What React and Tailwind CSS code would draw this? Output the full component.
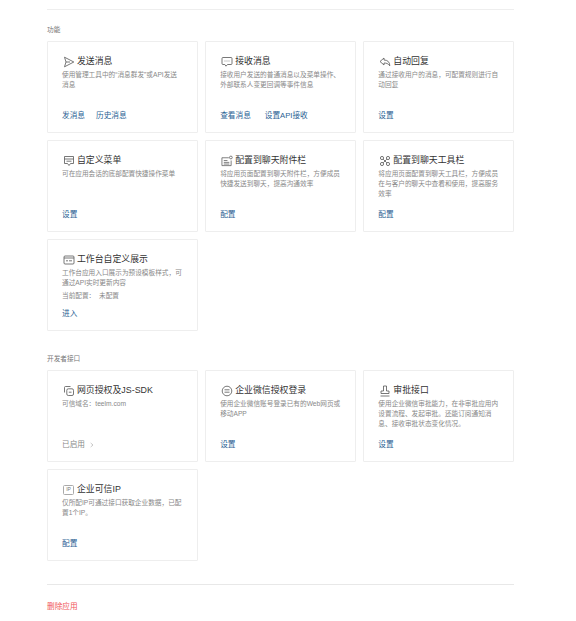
const Send = () => (
  <svg viewBox="0 0 12 12" className="w-[12px] h-[12px] shrink-0" fill="none" stroke="#555" strokeWidth="0.8">
    <path d="M1.5 1.2 L10.8 6 L1.5 10.8 L3 6 Z" />
    <path d="M3 6 H7" />
  </svg>
);

const Chat = () => (
  <svg viewBox="0 0 12 12" className="w-[12px] h-[12px] shrink-0" fill="none" stroke="#555" strokeWidth="0.8">
    <path d="M2 1.5 H10 A1 1 0 0 1 11 2.5 V7.5 A1 1 0 0 1 10 8.5 H6.5 L5 10.2 L3.8 8.5 H2 A1 1 0 0 1 1 7.5 V2.5 A1 1 0 0 1 2 1.5 Z" />
    <path d="M3.6 5 H4.4 M5.6 5 H6.4 M7.6 5 H8.4" />
  </svg>
);

const Reply = () => (
  <svg viewBox="0 0 12 12" className="w-[12px] h-[12px] shrink-0" fill="none" stroke="#555" strokeWidth="0.8">
    <path d="M5 2 L1 5.5 L5 9 V7 C7.5 7 9 7.5 10.8 9.8 C10.8 6 8.5 4 5 4 Z" />
  </svg>
);

const Menu = () => (
  <svg viewBox="0 0 12 12" className="w-[12px] h-[12px] shrink-0" fill="none" stroke="#555" strokeWidth="0.8">
    <path d="M1.5 1.5 H10.5 V8.5 H7.5 L6 10.5 L4.5 8.5 H1.5 Z" />
    <path d="M1.5 4 H10.5 M3.5 6.2 H8.5" />
  </svg>
);

const Attach = () => (
  <svg viewBox="0 0 13 12" className="w-[12px] h-[12px] shrink-0" fill="none" stroke="#555" strokeWidth="0.8">
    <path d="M8.5 2.5 H1 V11 H11 V5.5" />
    <path d="M3 5.5 H7 M3 7.5 H9 M3 9.3 H9" />
    <circle cx="10.7" cy="2.2" r="1.5" />
  </svg>
);

const Tool = () => (
  <svg viewBox="0 0 12 12" className="w-[12px] h-[12px] shrink-0" fill="none" stroke="#555" strokeWidth="0.8">
    <circle cx="3" cy="3" r="1.6" />
    <circle cx="9" cy="3" r="1.6" />
    <circle cx="3" cy="9" r="1.6" />
    <circle cx="9" cy="9" r="1.6" />
    <path d="M4.2 4.2 L7.8 7.8 M7.8 4.2 L4.2 7.8" />
  </svg>
);

const Board = () => (
  <svg viewBox="0 0 12 12" className="w-[12px] h-[12px] shrink-0" fill="none" stroke="#555" strokeWidth="0.8">
    <rect x="1" y="2" width="10" height="8" rx="1" />
    <path d="M1 4 H11 M3 6.8 H5 M6 6.8 H9" />
  </svg>
);

const Web = () => (
  <svg viewBox="0 0 12 12" className="w-[12px] h-[12px] shrink-0" fill="none" stroke="#555" strokeWidth="0.8">
    <path d="M7.5 1.5 H2.5 A1 1 0 0 0 1.5 2.5 V7.5" />
    <rect x="3.8" y="3.8" width="6.7" height="6.7" rx="1.5" />
    <path d="M5.8 7.2 H8.5" />
  </svg>
);

const Login = () => (
  <svg viewBox="0 0 12 12" className="w-[12px] h-[12px] shrink-0" fill="none" stroke="#555" strokeWidth="0.8">
    <circle cx="6" cy="6" r="4.8" />
    <path d="M3.5 4.8 H8.5 M3.5 7.2 H8.5" />
  </svg>
);

const Stamp = () => (
  <svg viewBox="0 0 12 12" className="w-[12px] h-[12px] shrink-0" fill="none" stroke="#555" strokeWidth="0.8">
    <path d="M4.5 1 H7.5 V6 H10 V8.5 H2 V6 H4.5 Z" />
    <path d="M1.5 11 H10.5" />
  </svg>
);

const IpBadge = () => (
  <span className="w-[11px] h-[10px] mr-[1px] shrink-0 border border-[#aaa] rounded-[1.5px] flex items-center justify-center text-[5px] leading-none text-[#777]">IP</span>
);

const features = [
  {
    icon: <Send />,
    title: '发送消息',
    desc: ['使用管理工具中的“消息群发”或API发送', <br key="br" />, '消息'],
    links: ['发消息', '历史消息'],
  },
  {
    icon: <Chat />,
    title: '接收消息',
    desc: ['接收用户发送的普通消息以及菜单操作、外部联系人变更回调等事件信息'],
    links: ['查看消息', '设置API接收'],
    linkGap: 'gap-[14px]',
  },
  {
    icon: <Reply />,
    title: '自动回复',
    desc: ['通过接收用户的消息，可配置规则进行自动回复'],
    links: ['设置'],
  },
  {
    icon: <Menu />,
    title: '自定义菜单',
    desc: ['可在应用会话的底部配置快捷操作菜单'],
    links: ['设置'],
  },
  {
    icon: <Attach />,
    title: '配置到聊天附件栏',
    desc: ['将应用页面配置到聊天附件栏，方便成员快捷发送到聊天，提高沟通效率'],
    links: ['配置'],
  },
  {
    icon: <Tool />,
    title: '配置到聊天工具栏',
    desc: ['将应用页面配置到聊天工具栏，方便成员在与客户的聊天中查看和使用，提高服务效率'],
    links: ['配置'],
  },
  {
    icon: <Board />,
    title: '工作台自定义展示',
    desc: ['工作台应用入口展示为预设模板样式，可通过API实时更新内容'],
    extra: '当前配置：  未配置',
    links: ['进入'],
  },
];

const devApis = [
  {
    icon: <Web />,
    title: '网页授权及JS-SDK',
    desc: ['可信域名：teelm.com'],
    status: '已启用',
  },
  {
    icon: <Login />,
    title: '企业微信授权登录',
    desc: ['使用企业微信账号登录已有的Web网页或移动APP'],
    links: ['设置'],
  },
  {
    icon: <Stamp />,
    title: '审批接口',
    desc: ['使用企业微信审批能力，在非审批应用内设置流程、发起审批。还能订阅通知消息、接收审批状态变化情况。'],
    links: ['设置'],
  },
  {
    icon: <IpBadge />,
    title: '企业可信IP',
    desc: ['仅所配IP可通过接口获取企业数据，已配置1个IP。'],
    links: ['配置'],
  },
];

const Card = ({ item }) => (
  <div className="h-[92px] bg-white border border-[#eeeeee] rounded-[1px] pl-[14px] pr-[13px] pt-[13px] pb-[11px] flex flex-col">
    <div className="flex items-center gap-[2px] h-[13px] pl-[1px]">
      {item.icon}
      <span className="text-[8.9px] leading-[13px] text-[#333] whitespace-nowrap">{item.title}</span>
    </div>
    <p className="mt-[2px] text-[6.67px] leading-[10px] text-[#888]">{item.desc}</p>
    {item.extra && <p className="mt-[3px] text-[6.67px] leading-[10px] text-[#888] whitespace-pre">{item.extra}</p>}
    <div className={`mt-auto flex items-center ${item.linkGap || 'gap-[11px]'} text-[7.67px] leading-[10px] text-[#2a5f94]`}>
      {item.links && item.links.map((l) => <span key={l}>{l}</span>)}
      {item.status && (
        <span className="flex items-center gap-[5px] text-[#888]">
          {item.status}
          <svg viewBox="0 0 6 8" className="w-[4px] h-[6px]" fill="none" stroke="#999" strokeWidth="0.8">
            <path d="M1 1 L4.5 4 L1 7" />
          </svg>
        </span>
      )}
    </div>
  </div>
);

const Section = ({ label, items }) => (
  <section>
    <h3 className="text-[6.67px] leading-[10px] font-normal text-[#777]">{label}</h3>
    <div className="mt-[6px] grid grid-cols-3 gap-x-[7.5px] gap-y-[7px]">
      {items.map((item) => <Card key={item.title} item={item} />)}
    </div>
  </section>
);

export default function App() {
  return (
    <div className="w-[576px] h-[621px] bg-white overflow-hidden px-[47px] pt-[9px] font-['Liberation_Sans','Noto_Sans_CJK_SC',sans-serif]">
      <div className="w-[467px]">
        <div className="border-t border-[#eeeeee] pt-[15px]">
          <Section label="功能" items={features} />
        </div>
        <div className="mt-[23px]">
          <Section label="开发者接口" items={devApis} />
        </div>
        <div className="mt-[23px] border-t border-[#e8e8e8] pt-[17px]">
          <span className="text-[7.67px] leading-[10px] block text-[#f0565a]">删除应用</span>
        </div>
      </div>
    </div>
  );
}
